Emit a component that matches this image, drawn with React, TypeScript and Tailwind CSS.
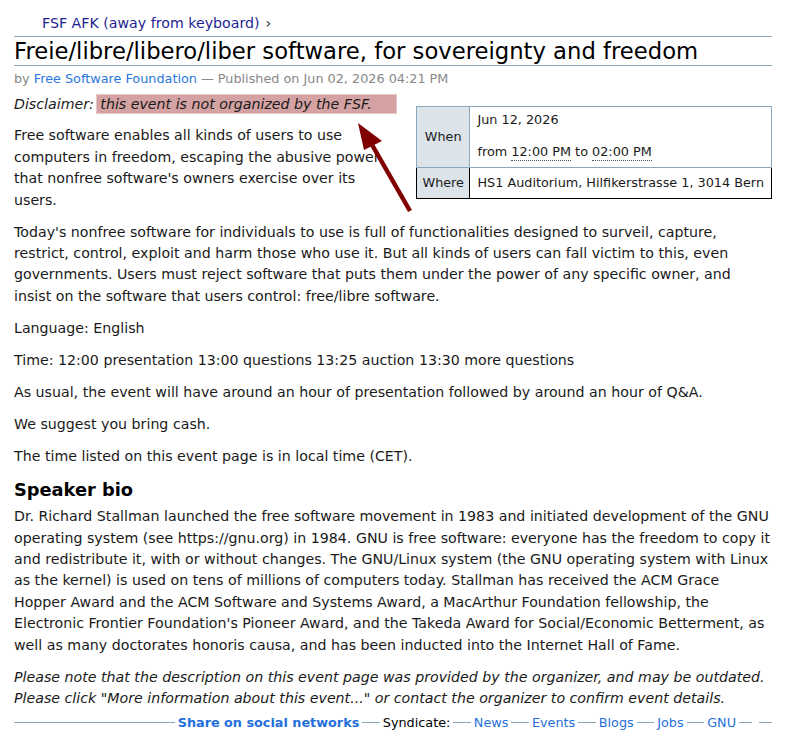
const font = { fontFamily: '"DejaVu Sans", Verdana, sans-serif' }

function Rule({ w }: { w?: string }) {
  return <span className={`h-px bg-[#8aa7bb] ${w ?? "w-[17.5px]"}`} />
}

function Clock({ t }: { t: string }) {
  return <span className="border-b border-dotted border-[#555] pb-[1px]">{t}</span>
}

export default function App() {
  const links = ["News", "Events", "Blogs", "Jobs", "GNU"]
  return (
    <div className="relative w-[794px] h-[742px] overflow-hidden bg-white text-[#1a1a1a] pl-[14px] pr-[22px]" style={font}>
      {/* breadcrumb */}
      <div className="pt-[14px] pb-[4px] pl-[28px] border-b border-[#8aa7bb] text-[14.2px] leading-[18px]">
        <a className="text-[#1f1f94]">FSF AFK (away from keyboard)</a>
        <span className="ml-[6px] text-[#222]">›</span>
      </div>

      <h1 className="text-[22.7px] leading-[28px] text-black border-b border-[#8aa7bb] whitespace-nowrap">
        Freie/libre/libero/liber software, for sovereignty and freedom
      </h1>

      <div className="mt-[5px] text-[12.8px] leading-[16px] text-[#888]">
        by <a className="text-[#2a78e0]">Free Software Foundation</a> — Published on Jun 02, 2026 04:21 PM
      </div>

      <div className="pt-[7px] text-[14.2px] leading-[21.4px]">
        <table className="float-right ml-[17px] mt-[12px] w-[356px] border-collapse text-[12.8px]">
          <tbody>
            <tr>
              <th className="w-[55px] bg-[#dce4ea] border border-[#8aa7bb] font-normal text-center align-middle">When</th>
              <td className="border border-[#8aa7bb] px-[7px] pt-[3px] pb-[5px] leading-[20px]">
                <div>Jun 12, 2026</div>
                <div className="mt-[12px]">
                  from <Clock t="12:00 PM" /> to <Clock t="02:00 PM" />
                </div>
              </td>
            </tr>
            <tr>
              <th className="bg-[#dce4ea] border-l border-b border-black border-t-[#8aa7bb] border-t font-normal text-center h-[31px]">Where</th>
              <td className="border border-black px-[7px] h-[31px] whitespace-nowrap">HS1 Auditorium, Hilfikerstrasse 1, 3014 Bern</td>
            </tr>
          </tbody>
        </table>

        <p className="italic mb-[10px] whitespace-nowrap">
          Disclaimer:{" "}
          <span className="bg-[#d4a2a2] outline outline-1 outline-[#e6c4c4] py-[1px] pl-[3px] pr-[24px] -ml-[1px]">
            this event is not organized by the FSF.
          </span>
        </p>

        <p className="mb-[10.6px]">
          Free software enables all kinds of users to use computers in freedom, escaping the abusive power that nonfree software's owners exercise over its users.
        </p>
        <p className="mb-[10.6px]">
          Today's nonfree software for individuals to use is full of functionalities designed to surveil, capture, restrict, control, exploit and harm those who use it. But all kinds of users can fall victim to this, even governments. Users must reject software that puts them under the power of any specific owner, and insist on the software that users control: free/libre software.
        </p>
        <p className="mb-[10.6px]">Language: English</p>
        <p className="mb-[10.6px]">Time: 12:00 presentation 13:00 questions 13:25 auction 13:30 more questions</p>
        <p className="mb-[10.6px]">As usual, the event will have around an hour of presentation followed by around an hour of Q&amp;A.</p>
        <p className="mb-[10.6px]">We suggest you bring cash.</p>
        <p>The time listed on this event page is in local time (CET).</p>

        <h2 className="mt-[11px] mb-[4px] text-[17.8px] leading-[24px] font-bold text-black">Speaker bio</h2>
        <p className="mb-[10.6px]">
          Dr. Richard Stallman launched the free software movement in 1983 and initiated development of the GNU operating system (see https://gnu.org) in 1984. GNU is free software: everyone has the freedom to copy it and redistribute it, with or without changes. The GNU/Linux system (the GNU operating system with Linux as the kernel) is used on tens of millions of computers today. Stallman has received the ACM Grace Hopper Award and the ACM Software and Systems Award, a MacArthur Foundation fellowship, the Electronic Frontier Foundation's Pioneer Award, and the Takeda Award for Social/Economic Betterment, as well as many doctorates honoris causa, and has been inducted into the Internet Hall of Fame.
        </p>
        <p className="italic">
          Please note that the description on this event page was provided by the organizer, and may be outdated. Please click "More information about this event..." or contact the organizer to confirm event details.
        </p>
      </div>

      {/* footer */}
      <div className="mt-[4px] flex items-center gap-[3px] text-[12.8px] leading-[18px]">
        <Rule w="flex-1" />
        <a className="font-bold text-[#1f6fdc]">Share on social networks</a>
        <Rule />
        <span className="text-black">Syndicate:</span>
        {links.map((l) => (
          <span key={l} className="flex items-center gap-[3px]">
            <Rule />
            <a className="text-[#1f6fdc]">{l}</a>
          </span>
        ))}
        <Rule w="w-[13px]" />
        <span className="w-[1px]" />
        <Rule w="w-[13px]" />
      </div>

      {/* annotation arrow */}
      <svg className="absolute left-0 top-0 pointer-events-none" width="794" height="742">
        <line x1="410" y1="211" x2="371" y2="143" stroke="#800000" strokeWidth="4.5" />
        <polygon points="358,123 382,141 364,150" fill="#800000" />
      </svg>
    </div>
  )
}
